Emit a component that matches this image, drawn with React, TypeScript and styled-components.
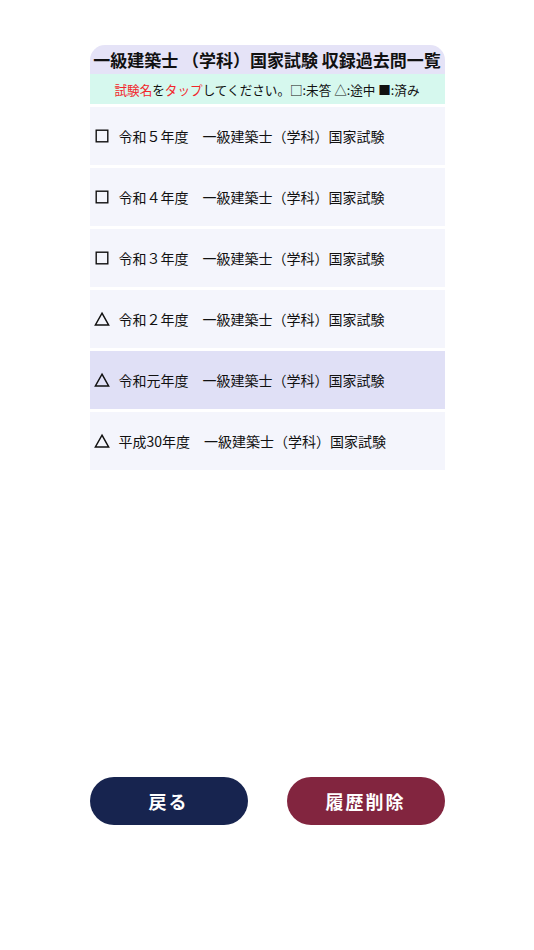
import React from 'react';
import styled, { createGlobalStyle } from 'styled-components';

const GlobalStyle = createGlobalStyle`
  html, body {
    margin: 0;
    padding: 0;
    background: #ffffff;
  }
  body {
    font-family: "Noto Sans CJK JP", "Noto Sans", sans-serif;
    color: #111111;
  }
`;

type Status = 'todo' | 'doing' | 'done';

interface Exam {
  label: string;
  status: Status;
}

const exams: Exam[] = [
  { label: '令和５年度　一級建築士（学科）国家試験', status: 'todo' },
  { label: '令和４年度　一級建築士（学科）国家試験', status: 'todo' },
  { label: '令和３年度　一級建築士（学科）国家試験', status: 'todo' },
  { label: '令和２年度　一級建築士（学科）国家試験', status: 'doing' },
  { label: '令和元年度　一級建築士（学科）国家試験', status: 'doing' },
  { label: '平成30年度　一級建築士（学科）国家試験', status: 'doing' },
];

const Page = styled.div`
  width: 534px;
  height: 950px;
  display: flex;
  flex-direction: column;
  align-items: center;
  box-sizing: border-box;
  padding-top: 45px;
`;

const Panel = styled.div`
  width: 355px;
  display: flex;
  flex-direction: column;
  flex: 1;
`;

const Title = styled.div`
  height: 29px;
  background: #e5e3f7;
  border-radius: 15px 15px 0 0;
  display: flex;
  align-items: center;
  justify-content: center;
  font-size: 17px;
  font-weight: 700;
  white-space: nowrap;
`;

const Notice = styled.div`
  height: 30px;
  background: #d6f8ee;
  display: flex;
  align-items: center;
  justify-content: center;
  font-size: 12.6px;
  white-space: nowrap;
`;

const Red = styled.span`
  color: #f2262b;
`;

const List = styled.div`
  display: flex;
  flex-direction: column;
  gap: 3px;
  margin-top: 3px;
`;

const Row = styled.div<{ $active?: boolean }>`
  height: 58px;
  background: ${p => (p.$active ? '#e0e0f6' : '#f4f5fc')};
  display: flex;
  align-items: center;
  padding-left: 4px;
  font-size: 14px;
  cursor: pointer;
  white-space: nowrap;
`;

const Mark = styled.svg`
  width: 16px;
  height: 16px;
  margin-right: 9px;
  flex-shrink: 0;
`;

const StatusMark: React.FC<{ status: Status }> = ({ status }) => (
  <Mark viewBox="0 0 16 16">
    {status === 'doing' ? (
      <path d="M8 2.2 L14.6 14 H1.4 Z" fill="none" stroke="#111" strokeWidth="1.5" />
    ) : (
      <rect
        x="2.2"
        y="2.2"
        width="11.6"
        height="11.6"
        fill={status === 'done' ? '#111' : 'none'}
        stroke="#111"
        strokeWidth="1.4"
      />
    )}
  </Mark>
);

const Spacer = styled.div`
  flex: 1;
`;

const Buttons = styled.div`
  display: flex;
  justify-content: space-between;
  margin-bottom: 125px;
`;

const Button = styled.button<{ $tone: 'navy' | 'wine' }>`
  width: 158px;
  height: 48px;
  border: none;
  border-radius: 24px;
  background: ${p => (p.$tone === 'navy' ? '#17244f' : '#82253f')};
  color: #ffffff;
  font-family: "Noto Sans CJK JP", sans-serif;
  font-size: 18px;
  font-weight: 700;
  letter-spacing: 2px;
  cursor: pointer;
`;

export default function App() {
  return (
    <>
      <GlobalStyle />
      <Page>
        <Panel>
          <Title>一級建築士 （学科）国家試験 収録過去問一覧</Title>
          <Notice>
            <Red>試験名</Red>を<Red>タップ</Red>してください。□:未答 △:途中 ■:済み
          </Notice>
          <List>
            {exams.map((exam, i) => (
              <Row key={exam.label} $active={i === 4}>
                <StatusMark status={exam.status} />
                {exam.label}
              </Row>
            ))}
          </List>
          <Spacer />
          <Buttons>
            <Button $tone="navy">戻る</Button>
            <Button $tone="wine">履歴削除</Button>
          </Buttons>
        </Panel>
      </Page>
    </>
  );
}
